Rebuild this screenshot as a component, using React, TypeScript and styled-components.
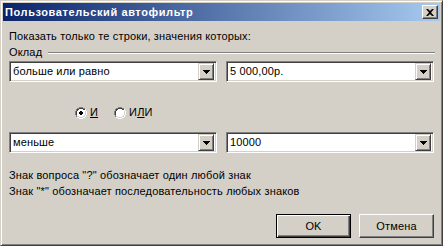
import React from "react";
import styled, { createGlobalStyle } from "styled-components";

const Global = createGlobalStyle`
  html, body { margin: 0; padding: 0; background: #d4d0c8; }
  * { box-sizing: border-box; }
  body { font-family: "Liberation Sans", Arial, sans-serif; font-size: 11px; color: #000; letter-spacing: 0.15px; }
`;

const Window = styled.div`
  width: 443px;
  height: 246px;
  background: #d4d0c8;
  border: 1px solid;
  border-color: #d4d0c8 #404040 #404040 #d4d0c8;
  box-shadow: inset 1px 1px #ffffff, inset -1px -1px #808080;
  padding: 2px;
  display: flex;
  flex-direction: column;
`;

const TitleBar = styled.div`
  height: 18px;
  background: linear-gradient(to right, #0a246a, #a6caf0);
  display: flex;
  align-items: center;
  justify-content: space-between;
  padding: 0 2px 0 2px;
`;

const Title = styled.span`
  color: #fff;
  font-weight: bold;
  font-size: 11px;
  line-height: 13px;
  letter-spacing: 0.6px;
`;

const CloseBtn = styled.div`
  width: 16px;
  height: 14px;
  background: #d4d0c8;
  border: 1px solid;
  border-color: #ffffff #404040 #404040 #ffffff;
  box-shadow: inset -1px -1px #808080;
  display: flex;
  align-items: center;
  justify-content: center;
`;

const Body = styled.div`
  flex: 1;
  padding: 9px 6px 0 6px;
  display: flex;
  flex-direction: column;
`;

const Text = styled.div<{ $mt?: number }>`
  line-height: 13px;
  margin-top: ${(p) => p.$mt ?? 0}px;
  white-space: nowrap;
`;

const GroupHeader = styled.div`
  display: flex;
  align-items: center;
  gap: 6px;
  margin-top: 3px;
  line-height: 13px;
`;

const Rule = styled.div`
  flex: 1;
  height: 2px;
  border-top: 1px solid #808080;
  border-bottom: 1px solid #ffffff;
  margin-right: -1px;
`;

const ComboRow = styled.div<{ $mt: number }>`
  display: flex;
  gap: 9px;
  margin-top: ${(p) => p.$mt}px;
`;

const Combo = styled.div`
  width: 208px;
  height: 21px;
  background: #fff;
  border: 1px solid;
  border-color: #808080 #ffffff #ffffff #808080;
  box-shadow: inset 1px 1px #404040, inset -1px -1px #d4d0c8;
  padding: 2px;
  display: flex;
  align-items: center;
`;

const ComboText = styled.span`
  flex: 1;
  padding-left: 1px;
  line-height: 13px;
`;

const DropBtn = styled.div`
  width: 16px;
  height: 17px;
  background: #d4d0c8;
  border: 1px solid;
  border-color: #d4d0c8 #404040 #404040 #d4d0c8;
  box-shadow: inset 1px 1px #ffffff, inset -1px -1px #808080;
  display: flex;
  align-items: center;
  justify-content: center;
`;

const RadioRow = styled.div`
  display: flex;
  align-items: center;
  margin-top: 24px;
  margin-left: 66px;
  height: 13px;
`;

const RadioItem = styled.label<{ $ml?: number }>`
  display: flex;
  align-items: center;
  gap: 3px;
  margin-left: ${(p) => p.$ml ?? 0}px;
  line-height: 13px;
`;

const Underlined = styled.span`
  text-decoration: underline;
`;

const Buttons = styled.div`
  display: flex;
  justify-content: flex-end;
  gap: 8px;
  margin-top: 16px;
`;

const Button = styled.div<{ $default?: boolean }>`
  width: 75px;
  height: 24px;
  background: #d4d0c8;
  display: flex;
  align-items: center;
  justify-content: center;
  line-height: 13px;
  border: 1px solid;
  border-color: ${(p) => (p.$default ? "#000 #000 #000 #000" : "#ffffff #404040 #404040 #ffffff")};
  box-shadow: ${(p) =>
    p.$default
      ? "inset 1px 1px #ffffff, inset -1px -1px #404040, inset -2px -2px #808080"
      : "inset -1px -1px #808080"};
`;

const Arrow = () => (
  <svg width="7" height="4" viewBox="0 0 7 4" style={{ display: "block" }}>
    <path d="M0 0h7L3.5 4z" fill="#000" shapeRendering="crispEdges" />
  </svg>
);

const Radio = ({ checked }: { checked?: boolean }) => (
  <svg width="12" height="12" viewBox="0 0 12 12" style={{ display: "block" }}>
    <path d="M4 0h4v1h2v1h1v2h1v4h-1v2h-1v1h-2v1h-4v-1h-2v-1h-1v-2h-1v-4h1v-2h1v-1h2z" fill="#ffffff" />
    <path d="M4 0h4v1h-4zM2 1h2v1h-2zM8 1h2v1h-2zM1 2h1v2h-1zM0 4h1v4h-1zM1 8h1v2h-1z" fill="#808080" />
    <path d="M1 4h1v4h-1zM2 2h2v1h-2zM4 1h4v1h-4zM8 2h2v1h-2zM2 3h1v1h-1z" fill="#404040" />
    <path d="M10 2h1v2h-1zM11 4h1v4h-1zM10 8h1v2h-1zM8 10h2v1h-2zM4 11h4v1h-4zM2 10h2v1h-2z" fill="#ffffff" />
    <path d="M10 4h1v4h-1zM9 8h1v2h-1zM4 10h4v1h-4zM2 9h2v1h-2zM8 9h1v1h-1z" fill="#d4d0c8" />
    {checked && <path d="M5 4h2v1h1v2h-1v1h-2v-1h-1v-2h1z" fill="#000" />}
  </svg>
);

export default function App() {
  return (
    <>
      <Global />
      <Window>
        <TitleBar>
          <Title>Пользовательский автофильтр</Title>
          <CloseBtn>
            <svg width="8" height="7" viewBox="0 0 8 7" style={{ display: "block" }}>
              <path d="M0 0h2l2 2 2-2h2L5 3.5 8 7H6L4 5 2 7H0l3-3.5z" fill="#000" />
            </svg>
          </CloseBtn>
        </TitleBar>
        <Body>
          <Text>Показать только те строки, значения которых:</Text>
          <GroupHeader>
            <span>Оклад</span>
            <Rule />
          </GroupHeader>
          <ComboRow $mt={2}>
            <Combo>
              <ComboText>больше или равно</ComboText>
              <DropBtn><Arrow /></DropBtn>
            </Combo>
            <Combo>
              <ComboText>5 000,00р.</ComboText>
              <DropBtn><Arrow /></DropBtn>
            </Combo>
          </ComboRow>
          <RadioRow>
            <RadioItem>
              <Radio checked />
              <Underlined>И</Underlined>
            </RadioItem>
            <RadioItem $ml={16}>
              <Radio />
              <span>
                И<Underlined>Л</Underlined>И
              </span>
            </RadioItem>
          </RadioRow>
          <ComboRow $mt={13}>
            <Combo>
              <ComboText>меньше</ComboText>
              <DropBtn><Arrow /></DropBtn>
            </Combo>
            <Combo>
              <ComboText>10000</ComboText>
              <DropBtn><Arrow /></DropBtn>
            </Combo>
          </ComboRow>
          <Text $mt={16}>Знак вопроса "?" обозначает один любой знак</Text>
          <Text $mt={3}>Знак "*" обозначает последовательность любых знаков</Text>
          <Buttons>
            <Button $default>OK</Button>
            <Button>Отмена</Button>
          </Buttons>
        </Body>
      </Window>
    </>
  );
}
